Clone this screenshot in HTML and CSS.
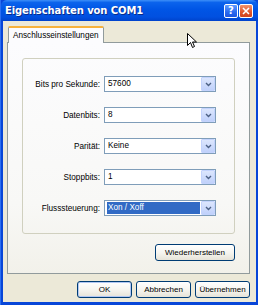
FILE: index.html
```html
<!DOCTYPE html>
<html lang="de">
<head>
    <meta charset="UTF-8">
    <meta name="viewport" content="width=device-width, initial-scale=1.0">
    <title>Eigenschaften von COM1</title>
    <link rel="stylesheet" href="styles.css">
</head>
<body>
    <div class="window">
        <div class="titlebar">
            <span class="title">Eigenschaften von COM1</span>
            <div class="caption-buttons">
                <span class="cap-btn help">?</span>
                <span class="cap-btn close">
                    <svg width="8" height="8" viewBox="0 0 8 8"><path d="M1 1 L7 7 M7 1 L1 7" stroke="#fff" stroke-width="1.6"/></svg>
                </span>
            </div>
        </div>
        <div class="client">
            <div class="tabs">
                <div class="tab active">Anschlusseinstellungen</div>
            </div>
            <div class="panel">
                <div class="group">
                    <div class="row">
                        <label>Bits pro Sekunde:</label>
                        <div class="combo"><span class="value">57600</span><span class="drop"><svg width="7" height="5" viewBox="0 0 7 5"><path d="M1 1 L3.5 3.5 L6 1" fill="none" stroke="#4d6185" stroke-width="1.4"/></svg></span></div>
                    </div>
                    <div class="row">
                        <label>Datenbits:</label>
                        <div class="combo"><span class="value">8</span><span class="drop"><svg width="7" height="5" viewBox="0 0 7 5"><path d="M1 1 L3.5 3.5 L6 1" fill="none" stroke="#4d6185" stroke-width="1.4"/></svg></span></div>
                    </div>
                    <div class="row">
                        <label>Parität:</label>
                        <div class="combo"><span class="value">Keine</span><span class="drop"><svg width="7" height="5" viewBox="0 0 7 5"><path d="M1 1 L3.5 3.5 L6 1" fill="none" stroke="#4d6185" stroke-width="1.4"/></svg></span></div>
                    </div>
                    <div class="row">
                        <label>Stoppbits:</label>
                        <div class="combo"><span class="value">1</span><span class="drop"><svg width="7" height="5" viewBox="0 0 7 5"><path d="M1 1 L3.5 3.5 L6 1" fill="none" stroke="#4d6185" stroke-width="1.4"/></svg></span></div>
                    </div>
                    <div class="row">
                        <label>Flusssteuerung:</label>
                        <div class="combo"><span class="value selected">Xon / Xoff</span><span class="drop"><svg width="7" height="5" viewBox="0 0 7 5"><path d="M1 1 L3.5 3.5 L6 1" fill="none" stroke="#4d6185" stroke-width="1.4"/></svg></span></div>
                    </div>
                </div>
                <div class="panel-actions">
                    <button type="button" class="button wide">Wiederherstellen</button>
                </div>
            </div>
            <div class="dialog-buttons">
                <button type="button" class="button default">OK</button>
                <button type="button" class="button">Abbrechen</button>
                <button type="button" class="button">Übernehmen</button>
            </div>
        </div>
        <svg class="cursor" width="11" height="16" viewBox="0 0 11 16">
            <path d="M0.5 0.5 L0.5 12.5 L3.5 9.5 L5.5 14.5 L7.5 13.5 L5.5 9 L9.5 9 Z" fill="#fff" stroke="#000" stroke-width="1"/>
        </svg>
    </div>
</body>
</html>
```

FILE: styles.css
```css
body {
    margin: 0;
    background-color: #fff;
    font-family: "Liberation Sans", Arial, sans-serif;
    font-size: 8px;
    color: #000;
}
.window {
    position: relative;
    width: 258px;
    height: 305px;
    display: flex;
    flex-direction: column;
    background-color: #0846d8;
    border-left: 1px solid #2b6ff2;
    box-sizing: border-box;
}
.titlebar {
    height: 21px;
    display: flex;
    align-items: center;
    justify-content: space-between;
    padding: 0 5px 0 4px;
    background: linear-gradient(to bottom, #3d8ff8 0%, #0b63ec 12%, #0055e5 45%, #0150e0 80%, #0043cc 100%);
    border-radius: 6px 6px 0 0;
}
.title {
    color: #fff;
    font-family: "DejaVu Sans", sans-serif;
    font-weight: bold;
    font-size: 10px;
    text-shadow: 1px 1px 0 #0a2c8a;
    letter-spacing: -0.1px;
}
.caption-buttons {
    display: flex;
    gap: 1px;
}
.cap-btn {
    width: 14px;
    height: 14px;
    box-sizing: border-box;
    border: 1px solid #fff;
    border-radius: 2px;
    display: flex;
    align-items: center;
    justify-content: center;
    color: #fff;
    font-family: "DejaVu Sans", sans-serif;
    font-weight: bold;
    font-size: 10px;
}
.cap-btn.help {
    background: linear-gradient(to bottom, #5e9cff, #2a6af0 60%, #1c55e0);
}
.cap-btn.close {
    background: linear-gradient(to bottom, #f0946e, #e0542a 60%, #cc4420);
}
.client {
    flex: 1;
    margin: 0 2px 3px 2px;
    padding: 5px 5px 0 4px;
    background-color: #ece9d8;
    display: flex;
    flex-direction: column;
}
.tabs {
    display: flex;
    height: 16px;
    padding-left: 1px;
}
.tab {
    height: 17px;
    box-sizing: border-box;
    padding: 3px 4px 0 4px;
    border: 1px solid #919b9c;
    border-bottom: none;
    border-top: 2px solid #f7b23c;
    border-radius: 2px 2px 0 0;
    background-color: #fcfcfe;
    position: relative;
    z-index: 1;
    font-size: 8.2px;
}
.panel {
    width: 243px;
    height: 232px;
    box-sizing: border-box;
    border: 1px solid #919b9c;
    background: linear-gradient(to bottom, #fcfcfe 0%, #f8f8f6 70%, #f2f1ea 100%);
    padding: 15px 14px 0 14px;
    display: flex;
    flex-direction: column;
}
.group {
    height: 176px;
    box-sizing: border-box;
    border: 1px solid #d0d0bf;
    border-radius: 3px;
    padding-top: 17px;
    display: flex;
    flex-direction: column;
    gap: 15px;
}
.row {
    display: flex;
    align-items: center;
    height: 16px;
    gap: 4px;
}
.row label {
    width: 77px;
    text-align: right;
    font-size: 8.2px;
}
.combo {
    width: 112px;
    height: 16px;
    box-sizing: border-box;
    border: 1px solid #7f9db9;
    background-color: #fff;
    display: flex;
    align-items: center;
    padding-left: 2px;
}
.combo .value {
    flex: 1;
    line-height: 12px;
    padding-left: 1px;
    font-size: 8.2px;
}
.combo .value.selected {
    background-color: #316ac5;
    color: #fff;
    margin-right: 1px;
}
.combo .drop {
    width: 14px;
    height: 14px;
    box-sizing: border-box;
    border: 1px solid #c3d3fd;
    border-radius: 1px;
    background: linear-gradient(to bottom, #dce6fd, #c0d1fb);
    display: flex;
    align-items: center;
    justify-content: center;
}
.panel-actions {
    display: flex;
    justify-content: flex-end;
    margin-top: 10px;
}
.button {
    height: 17px;
    box-sizing: border-box;
    border: 1px solid #003c74;
    border-radius: 3px;
    background: linear-gradient(to bottom, #ffffff 0%, #f6f5f0 50%, #e6e3d8 100%);
    font-family: "Liberation Sans", Arial, sans-serif;
    font-size: 8px;
    color: #000;
    padding: 0;
}
.button.wide {
    width: 80px;
}
.button.default {
    box-shadow: inset 0 0 0 1px #b2c8f3;
}
.dialog-buttons {
    display: flex;
    justify-content: flex-end;
    gap: 4px;
    margin-top: 7px;
    padding-right: 1px;
}
.dialog-buttons .button {
    width: 55px;
}
.cursor {
    position: absolute;
    left: 186px;
    top: 33px;
}
```
